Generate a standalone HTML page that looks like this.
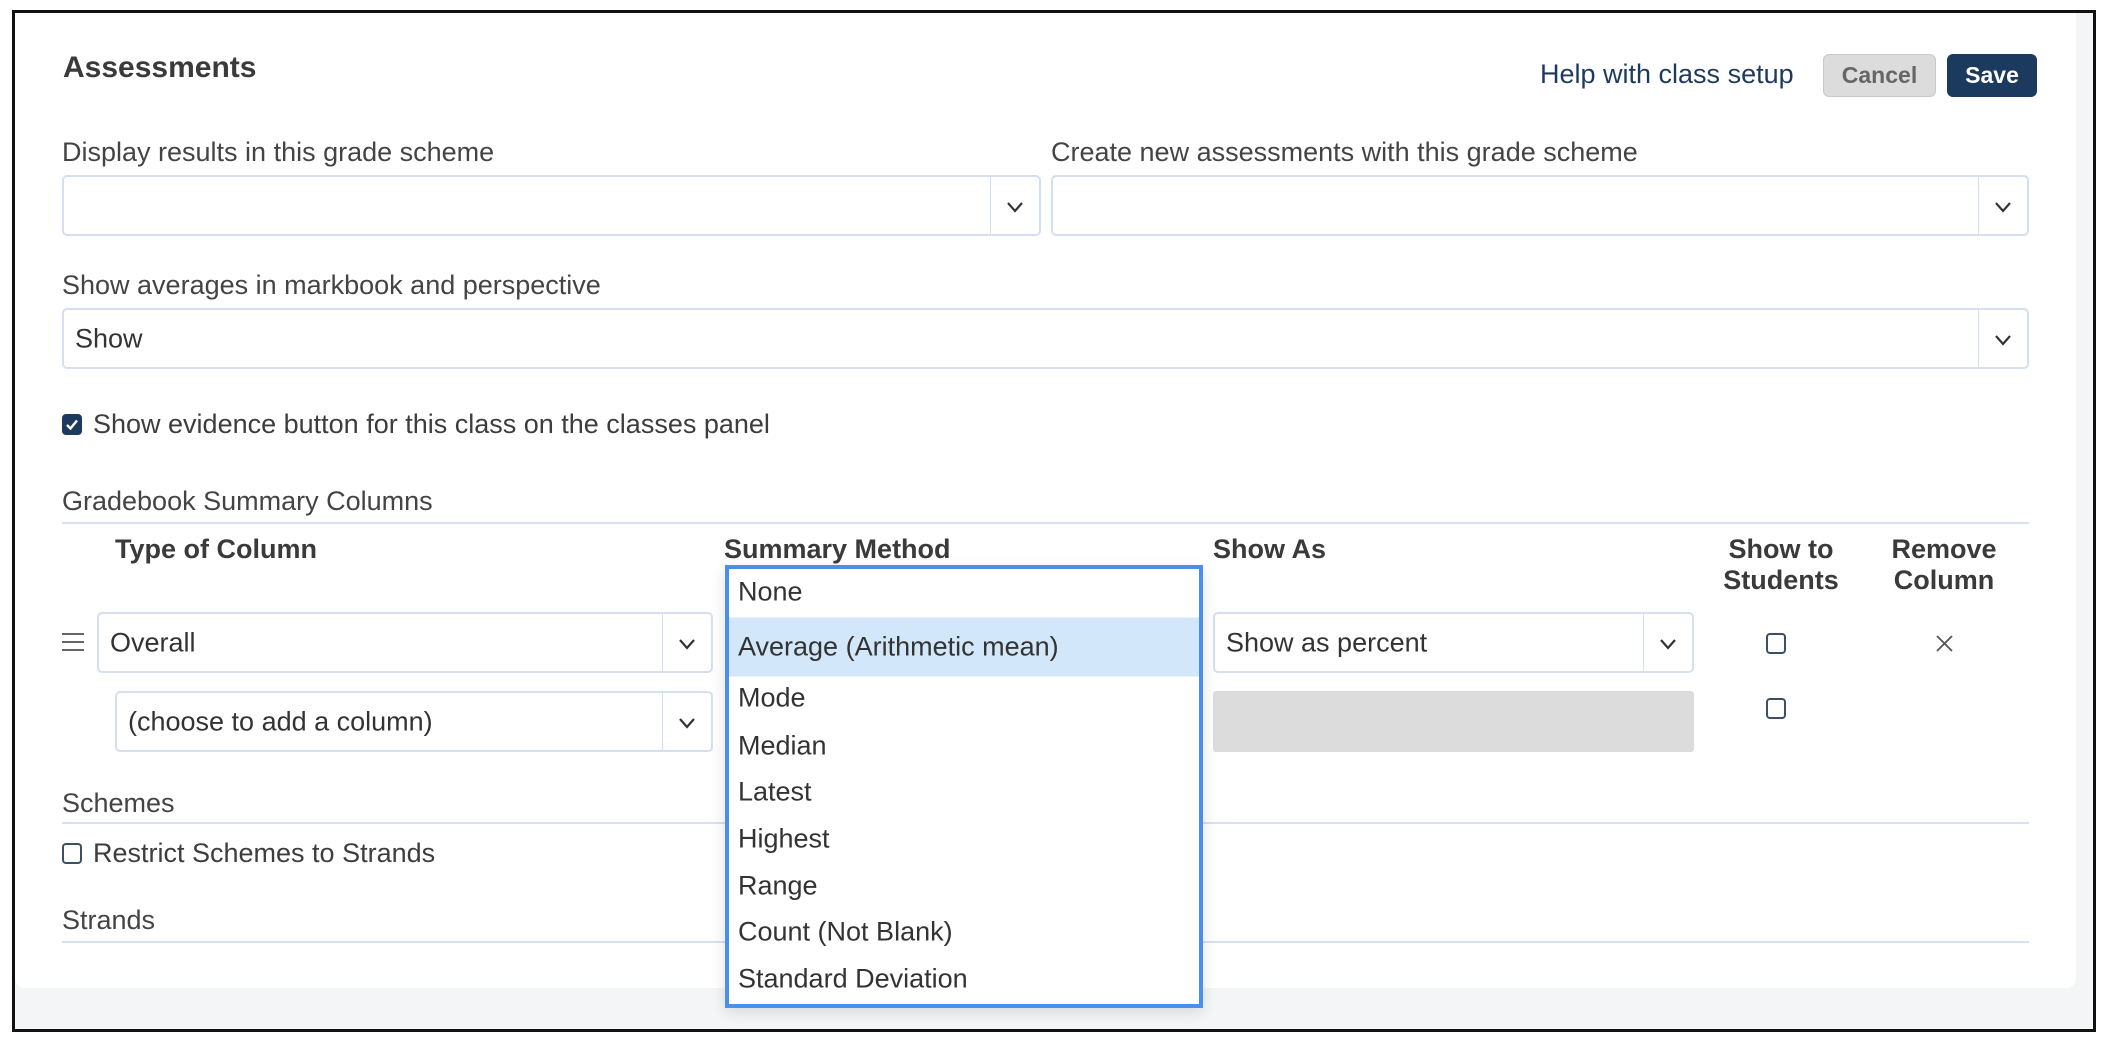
<!DOCTYPE html>
<html><head><meta charset="utf-8"><style>
*{box-sizing:border-box;margin:0;padding:0}
body{width:2108px;height:1042px;background:#fff;font-family:"Liberation Sans",Arial,sans-serif;color:#3d3d3d;position:relative;overflow:hidden}
.frame{position:absolute;left:12px;top:10px;width:2084px;height:1022px;border:3px solid #111;background:#f4f5f7}
.card{position:absolute;left:15px;top:13px;width:2061px;height:975px;background:#fff;border-radius:0 0 10px 10px}
.a{position:absolute;white-space:nowrap}
.lbl{font-size:27px;color:#444}
.sel{position:absolute;border:2px solid #d3e0ef;border-radius:5px;background:#fff;font-size:27px;color:#333}
.sel .dv{position:absolute;right:48px;top:0;bottom:0;border-left:1.5px solid #d3e0ef}
.sel .ch{position:absolute;right:15px;top:50%;width:18px;height:12px;margin-top:-5px}
.sel .t{position:absolute;left:11px;top:50%;transform:translateY(-50%)}
.hd{font-size:27px;font-weight:bold;color:#3a3a3a}
.line{position:absolute;left:62px;width:1967px;height:2px;background:#d6e2ef}
.cb{position:absolute;width:20px;height:21px;border:2px solid #3b4f66;border-radius:4px;background:#fff}
.dd{position:absolute;left:725px;top:565px;width:478px;height:443px;border:4px solid #4a8ef0;background:#fff;box-shadow:0 4px 14px rgba(0,0,0,.12)}
.dd div{position:absolute;left:9px;font-size:27px;color:#333;transform:translateY(-50%)}
</style></head><body>
<div class="frame"></div>
<div class="card"></div>
<svg width="0" height="0" style="position:absolute"><defs><symbol id="chev" viewBox="0 0 18 12"><path d="M2 2 L9 10 L16 2" fill="none" stroke="#333" stroke-width="2.2"/></symbol></defs></svg>

<div class="a" style="left:63px;top:51px;font-size:30px;font-weight:bold;color:#3a3a3a">Assessments</div>
<div class="a" style="left:1540px;top:59px;font-size:27px;color:#1d3a5e">Help with class setup</div>
<div class="a" style="left:1823px;top:54px;width:113px;height:43px;background:#dcdcdc;border:1.5px solid #c9c9c9;border-radius:6px;font-size:23px;font-weight:bold;color:#666;text-align:center;line-height:40px">Cancel</div>
<div class="a" style="left:1947px;top:54px;width:90px;height:43px;background:#1b3a5e;border-radius:6px;font-size:23px;font-weight:bold;color:#fff;text-align:center;line-height:43px">Save</div>

<div class="a lbl" style="left:62px;top:137px">Display results in this grade scheme</div>
<div class="a lbl" style="left:1051px;top:137px">Create new assessments with this grade scheme</div>
<div class="sel" style="left:62px;top:175px;width:979px;height:61px"><span class="dv"></span><svg class="ch"><use href="#chev"/></svg></div>
<div class="sel" style="left:1051px;top:175px;width:978px;height:61px"><span class="dv"></span><svg class="ch"><use href="#chev"/></svg></div>

<div class="a lbl" style="left:62px;top:270px">Show averages in markbook and perspective</div>
<div class="sel" style="left:62px;top:308px;width:1967px;height:61px"><span class="t">Show</span><span class="dv"></span><svg class="ch"><use href="#chev"/></svg></div>

<div class="cb" style="left:62px;top:414px;background:#1b3a5e;border-color:#1b3a5e"><svg width="16" height="17" viewBox="0 0 16 17" style="position:absolute;left:0;top:0"><path d="M3 9 L6.5 12.5 L13 4.5" fill="none" stroke="#fff" stroke-width="2.4"/></svg></div>
<div class="a lbl" style="left:93px;top:409px;color:#3d3d3d">Show evidence button for this class on the classes panel</div>

<div class="a lbl" style="left:62px;top:486px">Gradebook Summary Columns</div>
<div class="line" style="top:522px"></div>

<div class="a hd" style="left:115px;top:534px">Type of Column</div>
<div class="a hd" style="left:724px;top:534px">Summary Method</div>
<div class="a hd" style="left:1213px;top:534px">Show As</div>
<div class="a hd" style="left:1781px;top:534px;transform:translateX(-50%);text-align:center;line-height:31px">Show to<br>Students</div>
<div class="a hd" style="left:1944px;top:534px;transform:translateX(-50%);text-align:center;line-height:31px">Remove<br>Column</div>

<svg class="a" style="left:62px;top:632px" width="22" height="20"><path d="M0 2H22M0 10H22M0 18H22" stroke="#666" stroke-width="2"/></svg>
<div class="sel" style="left:97px;top:612px;width:616px;height:61px"><span class="t">Overall</span><span class="dv"></span><svg class="ch"><use href="#chev"/></svg></div>
<div class="sel" style="left:1213px;top:612px;width:481px;height:61px"><span class="t">Show as percent</span><span class="dv"></span><svg class="ch"><use href="#chev"/></svg></div>
<div class="cb" style="left:1766px;top:633px"></div>
<svg class="a" style="left:1936px;top:635px" width="17" height="17"><path d="M1 1L16 16M16 1L1 16" stroke="#555" stroke-width="1.8"/></svg>

<div class="sel" style="left:115px;top:691px;width:598px;height:61px"><span class="t">(choose to add a column)</span><span class="dv"></span><svg class="ch"><use href="#chev"/></svg></div>
<div class="a" style="left:1213px;top:691px;width:481px;height:61px;background:#dcdcdc;border-radius:3px"></div>
<div class="cb" style="left:1766px;top:698px"></div>

<div class="a lbl" style="left:62px;top:788px">Schemes</div>
<div class="line" style="top:822px"></div>
<div class="cb" style="left:62px;top:843px"></div>
<div class="a lbl" style="left:93px;top:838px;color:#3d3d3d">Restrict Schemes to Strands</div>
<div class="a lbl" style="left:62px;top:905px">Strands</div>
<div class="line" style="top:941px"></div>

<div class="dd">
<div style="top:23px">None</div>
<div style="left:0;top:78px;width:470px;height:59px;background:#d3e7fb;transform:translateY(-50%)"></div>
<div style="top:78px">Average (Arithmetic mean)</div>
<div style="top:129px">Mode</div>
<div style="top:177px">Median</div>
<div style="top:223px">Latest</div>
<div style="top:270px">Highest</div>
<div style="top:317px">Range</div>
<div style="top:363px">Count (Not Blank)</div>
<div style="top:410px">Standard Deviation</div>
</div>
</body></html>
